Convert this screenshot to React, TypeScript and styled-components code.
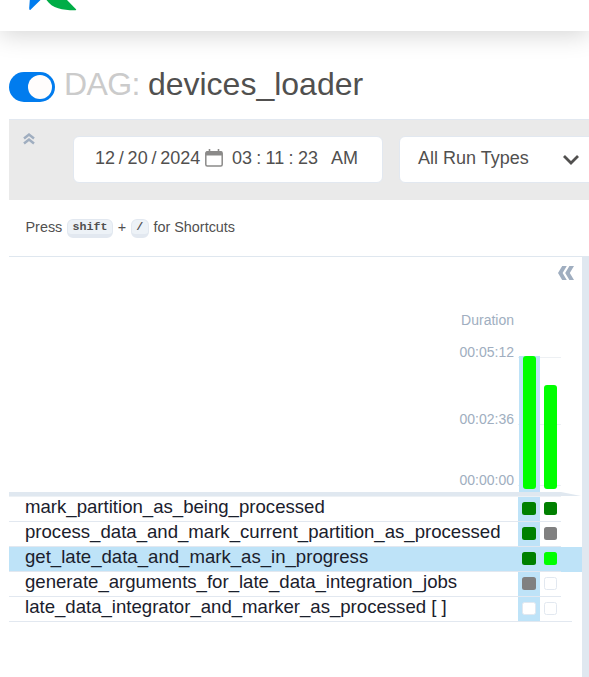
import React from "react";
import styled, { createGlobalStyle } from "styled-components";

const GlobalStyle = createGlobalStyle`
  * { box-sizing: border-box; }
  html, body { margin: 0; background: #fff; overflow: hidden; }
  body { font-family: "Liberation Sans", Arial, sans-serif; color: #51504f; }
`;

const Page = styled.div`
  width: 100%;
  height: 677px;
  overflow: hidden;
  display: flex;
  flex-direction: column;
`;

const Header = styled.header`
  flex: none;
  height: 31px;
  padding-left: 28px;
  background: #fff;
  box-shadow: 0 4px 24px 0 rgba(0, 0, 0, 0.17);
  clip-path: inset(0 0 -40px 0);
  svg { display: block; }
`;

const TitleRow = styled.div`
  flex: none;
  height: 88px;
  padding: 23px 0 0 9px;
  display: flex;
  align-items: center;
`;

const Toggle = styled.div`
  width: 46px;
  height: 30px;
  margin-right: 9px;
  padding: 3px;
  border-radius: 15px;
  background: #017cee;
  display: flex;
  justify-content: flex-end;
`;

const Knob = styled.span`
  width: 24px;
  height: 24px;
  border-radius: 50%;
  background: #fffdfc;
`;

const Title = styled.h1`
  margin: -5px 0 0;
  font-size: 32px;
  line-height: 40px;
  font-weight: 400;
  white-space: pre;
`;

const Muted = styled.span`
  color: #cbcbcb;
  letter-spacing: -0.65px;
`;

const Filters = styled.div`
  flex: none;
  height: 81px;
  margin-left: 9px;
  border-top: 1px solid #e2e8f0;
  background: #eaeaea;
  display: flex;
  padding: 16px 0 0 13px;
`;

const CollapseIcon = styled.svg`
  width: 14px;
  height: 14px;
  margin: -4px 38px 0 0;
  flex: none;
`;

const Field = styled.div<{ $width: number; $gap: number }>`
  flex: none;
  width: ${(p) => p.$width}px;
  height: 47px;
  margin-left: -1px;
  margin-right: ${(p) => p.$gap}px;
  border: 1px solid #e2e8f0;
  border-radius: 6px;
  background: #fff;
  font-size: 18px;
  line-height: 42px;
  display: flex;
  white-space: pre;
`;

const DateText = styled.span`
  width: 110px;
  margin-left: 21px;
  word-spacing: -1.2px;
`;

const CalendarIcon = styled.svg`
  width: 18px;
  height: 18px;
  margin: 12px 9px 0 0;
`;

const TimeText = styled.span`
  width: 99px;
  word-spacing: -0.7px;
`;

const SelectText = styled.span`
  width: 144px;
  margin-left: 18px;
`;

const Chevron = styled.svg`
  width: 18px;
  height: 12px;
  margin-top: 17px;
`;

const Hints = styled.div`
  flex: none;
  height: 56px;
  padding: 0 0 2px 25.5px;
  display: flex;
  align-items: center;
  font-size: 14.4px;
`;

const Key = styled.kbd<{ $width: number }>`
  width: ${(p) => p.$width}px;
  height: 19px;
  margin: 2px 4.7px 0;
  border: 1px solid #e2e8f0;
  border-bottom-width: 4px;
  border-radius: 6px;
  background: #edf2f7;
  font: bold 11.7px/14px "Liberation Mono", monospace;
  text-align: center;
`;

const Panel = styled.main`
  flex: 1;
  margin-left: 9px;
  border-top: 1px solid #dfe7ef;
  display: flex;
`;

const GridView = styled.section`
  width: 573px;
`;

const Divider = styled.div`
  flex: 1;
  margin-top: -1px;
  background: #e0e8f0;
`;

const PanelTop = styled.div`
  height: 50px;
  padding: 9px 7px 0 0;
  display: flex;
  justify-content: flex-end;
`;

const Chart = styled.div`
  height: 185px;
  display: flex;
`;

const Labels = styled.div`
  width: 505px;
  display: grid;
  grid-template-rows: 32px 67px 61px 20px;
  padding-top: 5px;
  text-align: right;
  color: #a0aec0;
  font-size: 14px;
  line-height: 16px;
`;

const Plot = styled.div`
  width: 43px;
  height: 136px;
  margin: 49px 0 0 4px;
  padding-left: 1px;
  display: flex;
  background:
    linear-gradient(#edf0f3, #edf0f3) 0 1px / 43px 1px no-repeat,
    linear-gradient(#edf0f3, #edf0f3) 0 68px / 43px 1px no-repeat,
    linear-gradient(#edf0f3, #edf0f3) 0 129px / 43px 1px no-repeat;
`;

const RunColumn = styled.div<{ $selected?: boolean }>`
  width: 21px;
  height: 136px;
  padding: 0 4px 3px;
  background: ${(p) => (p.$selected ? "#bee3f8" : "transparent")};
  display: flex;
  align-items: flex-end;
`;

const RunBar = styled.div<{ $height: number }>`
  width: 13px;
  height: ${(p) => p.$height}px;
  border-radius: 3px;
  background: #00ff00;
`;

const Separator = styled.div`
  height: 4px;
  background: #e0e8f0;
  clip-path: polygon(0 0, 552px 0, 572px 4px, 0 4px);
`;

const TableEdge = styled.div`
  width: 552px;
  height: 1px;
  background: #edf1f5;
`;

const TaskRow = styled.div<{ $active?: boolean }>`
  height: 25px;
  display: flex;
  background: ${(p) => (p.$active ? "#bee3f8" : "transparent")};
`;

const TaskName = styled.div`
  width: 509px;
  padding-left: 16px;
  border-bottom: 1px solid #e2e8f0;
  color: #1a202c;
  font-size: 18.6px;
  line-height: 20px;
  white-space: pre;
`;

const Cell = styled.div<{ $selected?: boolean }>`
  width: ${(p) => (p.$selected ? 22 : 21)}px;
  padding: 5px 0 0 4px;
  border-bottom: 1px solid #e2e8f0;
  background: ${(p) => (p.$selected ? "#bee3f8" : "transparent")};
`;

const State = styled.div<{ $color?: string; $wide?: boolean }>`
  width: ${(p) => (p.$wide ? 14 : 13)}px;
  height: 13px;
  border-radius: 2.5px;
  border: ${(p) => (p.$color ? "0" : "1px solid #e2e8f0")};
  background: ${(p) => p.$color ?? "#fff"};
`;

const RowTail = styled.div`
  width: 11px;
  border-bottom: 1px solid #e2e8f0;
`;

const SUCCESS = "#008000";
const RUNNING = "#00ff00";
const QUEUED = "#808080";

const tasks: { name: string; states: (string | undefined)[]; active?: boolean }[] = [
  { name: "mark_partition_as_being_processed", states: [SUCCESS, SUCCESS] },
  { name: "process_data_and_mark_current_partition_as_processed", states: [SUCCESS, QUEUED] },
  { name: "get_late_data_and_mark_as_in_progress", states: [SUCCESS, RUNNING], active: true },
  { name: "generate_arguments_for_late_data_integration_jobs", states: [QUEUED, undefined] },
  { name: "late_data_integrator_and_marker_as_processed [ ]", states: [undefined, undefined] },
];

export default function App() {
  return (
    <Page>
      <GlobalStyle />
      <Header>
        <svg width="52" height="12" viewBox="0 0 52 12">
          <path d="M1.8 0H12.5L3 9.2Q1.2 11.5 1.2 8Z" fill="#017cee" />
          <path d="M18.5 0H39L48 9.2Q49 10.4 46 10.3C35 10.3 24 8.4 18.5 0Z" fill="#00ad46" />
        </svg>
      </Header>
      <TitleRow>
        <Toggle><Knob /></Toggle>
        <Title><Muted>DAG: </Muted>devices_loader</Title>
      </TitleRow>
      <Filters>
        <CollapseIcon viewBox="0 0 14 14" fill="none" stroke="#a0aec0" strokeWidth="2.5">
          <path d="M2 6.5L7 2.5L12 6.5M2 11.5L7 7.5L12 11.5" />
        </CollapseIcon>
        <Field $width={310} $gap={17}>
          <DateText>12 / 20 / 2024</DateText>
          <CalendarIcon viewBox="0 0 18 18" fill="none" stroke="#8b8a89">
            <rect x="0.8" y="2.8" width="16.4" height="14.2" rx="1.5" strokeWidth="1.5" />
            <path d="M1 4.5H17" strokeWidth="4" />
            <path d="M4.5 0V3M13.5 0V3" strokeWidth="1.6" />
          </CalendarIcon>
          <TimeText>03 : 11 : 23</TimeText>
          <span>AM</span>
        </Field>
        <Field $width={200} $gap={0}>
          <SelectText>All Run Types</SelectText>
          <Chevron viewBox="0 0 18 12" fill="none" stroke="#51504f" strokeWidth="2.8">
            <path d="M2 2L9 9L16 2" />
          </Chevron>
        </Field>
      </Filters>
      <Hints>
        Press<Key $width={46}>shift</Key>+<Key $width={18}>/</Key>for Shortcuts
      </Hints>
      <Panel>
        <GridView>
          <PanelTop>
            <svg width="18" height="16" viewBox="0 0 18 16" fill="#a0aec0">
              <path d="M5.2 0H9.8L5.6 7L9.8 14H5.2L1 7ZM12.4 0H17L12.8 7L17 14H12.4L8.2 7Z" />
            </svg>
          </PanelTop>
          <Chart>
            <Labels>
              <span>Duration</span>
              <span>00:05:12</span>
              <span>00:02:36</span>
              <span>00:00:00</span>
            </Labels>
            <Plot>
              <RunColumn $selected><RunBar $height={133} /></RunColumn>
              <RunColumn><RunBar $height={104} /></RunColumn>
            </Plot>
          </Chart>
          <Separator />
          <TableEdge />
          {tasks.map((task, index) => (
            <TaskRow key={task.name} $active={task.active}>
              <TaskName>{task.name}</TaskName>
              <Cell $selected><State $wide $color={task.states[0]} /></Cell>
              <Cell><State $color={task.states[1]} /></Cell>
              {index === tasks.length - 1 && <RowTail />}
            </TaskRow>
          ))}
        </GridView>
        <Divider />
      </Panel>
    </Page>
  );
}
